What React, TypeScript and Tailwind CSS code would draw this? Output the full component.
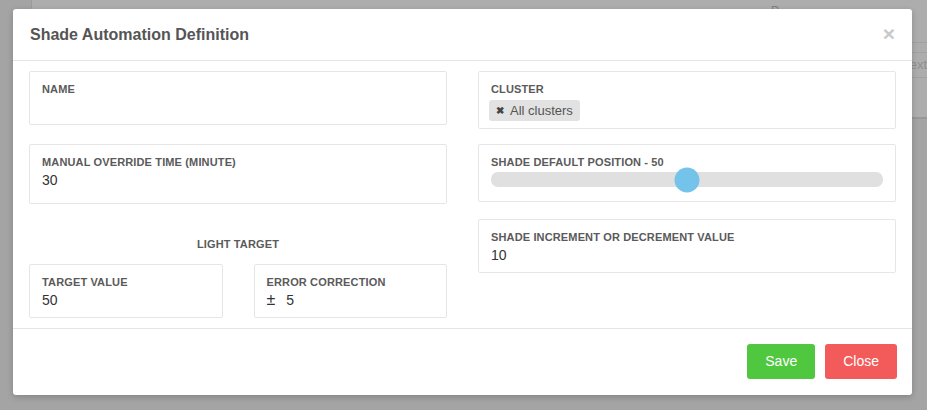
import React from 'react'

const font = { fontFamily: '"Liberation Sans", Arial, Helvetica, sans-serif' }

function Field({ label, height, children }: { label: string; height: string; children?: React.ReactNode }) {
  return (
    <div className={`border border-[#e6e6e6] rounded-[2px] px-[12px] pt-[10px] ${height}`}>
      <p className="text-[11px] leading-[14px] tracking-[0.14px] font-bold uppercase text-[#5a5a5a]">{label}</p>
      {children}
    </div>
  )
}

function Value({ children }: { children: React.ReactNode }) {
  return <p className="mt-[1px] text-[14px] leading-[20px] text-[#333]">{children}</p>
}

export default function App() {
  return (
    <div className="relative w-[927px] h-[410px] overflow-hidden bg-[#a4a4a4]" style={font}>
      {/* page behind the backdrop */}
      <div className="flex h-[119px]">
        <div className="w-[34px] border-r border-[#9c9c9c]" />
        <div className="flex-1 flex flex-col bg-[#adadad] border-b-2 border-[#979797]">
          <div className="h-[42px] flex justify-end pr-[148px] pt-[2px] text-[12px] text-[#7f7f7f]">P</div>
          <div className="h-[10px] border-t border-[#a1a1a1]" />
          <div className="h-[26px] border-y border-[#a1a1a1] flex items-center pl-[878px] text-[13px] text-[#8f8f8f]">ext</div>
        </div>
      </div>

      {/* modal */}
      <div className="absolute left-[13px] top-[9px] w-[899px] bg-white rounded-[3px] shadow-[0_2px_6px_rgba(0,0,0,0.2)] flex flex-col">
        <div className="h-[52px] flex items-center justify-between pl-[17px] pr-[17px] border-b border-[#e5e5e5]">
          <h1 className="text-[16px] font-bold text-[#555]">Shade Automation Definition</h1>
          <span className="text-[21px] leading-none font-bold text-[#c9c9c9] -mt-[2px]">×</span>
        </div>

        <div className="h-[268px] px-[16px] pt-[10px] grid grid-cols-2 gap-x-[31px] border-b border-[#e5e5e5]">
          {/* left column */}
          <div className="flex flex-col">
            <Field label="Name" height="h-[54px]" />
            <div className="mt-[19px]">
              <Field label="Manual override time (minute)" height="h-[60px]">
                <Value>30</Value>
              </Field>
            </div>
            <p className="mt-[33px] text-center text-[11px] leading-[14px] tracking-[0.14px] font-bold uppercase text-[#5a5a5a]">Light Target</p>
            <div className="mt-[13px] grid grid-cols-2 gap-x-[31px]">
              <Field label="Target value" height="h-[54px]">
                <Value>50</Value>
              </Field>
              <Field label="Error correction" height="h-[54px]">
                <Value>
                  <span className="text-[16px]">±</span>
                  <span className="ml-[11px]">5</span>
                </Value>
              </Field>
            </div>
          </div>

          {/* right column */}
          <div className="flex flex-col">
            <Field label="Cluster" height="h-[58px]">
              <div className="mt-[4px] -ml-[2px] inline-flex items-center h-[21px] px-[7px] gap-[6px] rounded-[3px] bg-[#e2e2e2] text-[13px] text-[#555]">
                <span className="text-[10px] font-bold text-[#444]">✖</span>
                <span>All clusters</span>
              </div>
            </Field>
            <div className="mt-[15px]">
              <Field label="Shade default position - 50" height="h-[58px]">
                <div className="relative mt-[3px] h-[15px] rounded-[7px] bg-[#e0e0e0]">
                  <div className="absolute left-1/2 top-1/2 -translate-x-1/2 -translate-y-1/2 w-[25px] h-[25px] rounded-full bg-[#73c3ea]" />
                </div>
              </Field>
            </div>
            <div className="mt-[17px]">
              <Field label="Shade increment or decrement value" height="h-[54px]">
                <Value>10</Value>
              </Field>
            </div>
          </div>
        </div>

        <div className="h-[66px] flex justify-end items-start gap-[10px] pt-[15px] pr-[15px]">
          <button className="h-[35px] px-[18px] rounded-[3px] bg-[#4fc83f] text-white text-[14px]">Save</button>
          <button className="h-[35px] px-[18px] rounded-[3px] bg-[#f25b59] text-white text-[14px]">Close</button>
        </div>
      </div>
    </div>
  )
}
